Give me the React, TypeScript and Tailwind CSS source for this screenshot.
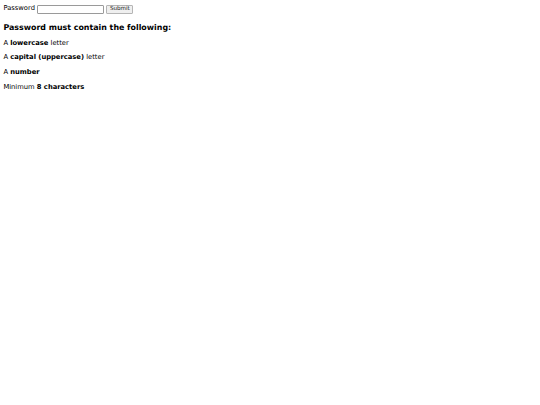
export default function App() {
  return (
    <div className="min-h-[405px] bg-white p-[3.4px] font-['DejaVu_Sans',sans-serif] text-[6.75px] leading-[1.164] text-black">
      <form className="flex items-center h-[11.5px]" onSubmit={(e) => e.preventDefault()}>
        <label className="mr-[2.5px]">Password</label>
        <input
          type="password"
          className="w-[67px] h-[9px] border border-[#9a9a9a] rounded-[1px] bg-white mr-[2px]"
        />
        <button
          type="submit"
          className="h-[9px] px-[2.5px] border border-[#b5b5b5] rounded-[1px] bg-[#efefef] text-[5.6px] leading-none text-[#222]"
        >
          Submit
        </button>
      </form>
      <h3 className="mt-[7.9px] mb-[7.9px] text-[7.9px] font-bold leading-[1.164]">
        Password must contain the following:
      </h3>
      <p className="my-[6.75px]">
        A <b>lowercase</b> letter
      </p>
      <p className="my-[6.75px]">
        A <b>capital (uppercase)</b> letter
      </p>
      <p className="my-[6.75px]">
        A <b>number</b>
      </p>
      <p className="my-[6.75px]">
        Minimum <b>8 characters</b>
      </p>
    </div>
  );
}
